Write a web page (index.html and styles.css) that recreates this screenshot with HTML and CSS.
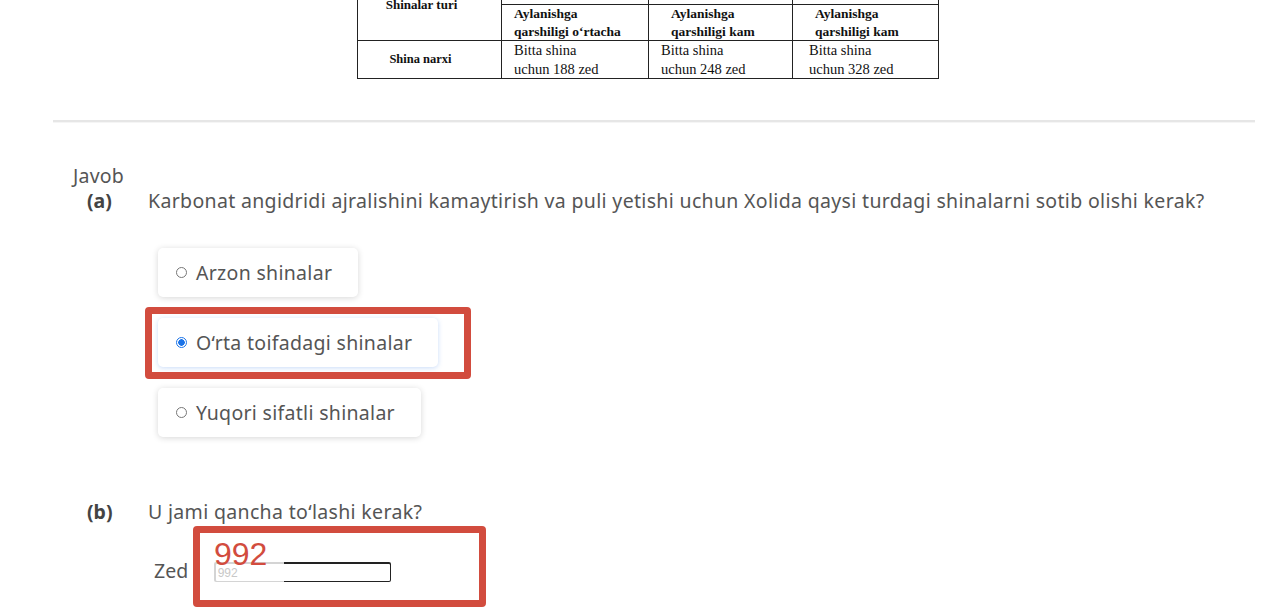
FILE: index.html
```html
<!DOCTYPE html>
<html>
<head>
<meta charset="utf-8">
<link rel="stylesheet" href="styles.css">
</head>
<body>
<div class="page">
  <div class="figure">
    <table class="tires">
      <tr class="r1">
        <td class="c1 hd" rowspan="2">Shinalar turi</td>
        <td class="c2"><b>Arzon</b></td>
        <td class="c3 ctr"><b>shinalar</b></td>
        <td class="c4 ctr"><b>shinalar</b></td>
      </tr>
      <tr class="r2">
        <td class="sub">Aylanishga<br>qarshiligi o‘rtacha</td>
        <td class="sub wide">Aylanishga<br>qarshiligi kam</td>
        <td class="sub wide">Aylanishga<br>qarshiligi kam</td>
      </tr>
      <tr class="r3">
        <td class="hd">Shina narxi</td>
        <td class="price">Bitta shina<br>uchun 188 zed</td>
        <td class="price">Bitta shina<br>uchun 248 zed</td>
        <td class="price p4">Bitta shina<br>uchun 328 zed</td>
      </tr>
    </table>
  </div>

  <div class="divider"></div>

  <section class="answer">
    <div class="javob">Javob</div>
    <div class="part">
      <span class="label">(a)</span>
      <span class="question">Karbonat angidridi ajralishini kamaytirish va puli yetishi uchun Xolida qaysi turdagi shinalarni sotib olishi kerak?</span>
    </div>

    <div class="options">
      <label class="opt"><span class="radio"></span>Arzon shinalar</label>
      <label class="opt selected"><span class="radio on"></span>O‘rta toifadagi shinalar</label>
      <label class="opt"><span class="radio"></span>Yuqori sifatli shinalar</label>
    </div>

    <div class="part part-b">
      <span class="label">(b)</span>
      <span class="question">U jami qancha to‘lashi kerak?</span>
    </div>

    <div class="zed-row">
      <span class="zed">Zed</span>
      <span class="field"><span class="field-inner">992</span></span>
    </div>
  </section>

  <div class="mark mark-a"></div>
  <div class="mark mark-b"></div>
  <div class="hand">992</div>
</div>
</body>
</html>
```

FILE: styles.css
```css
* { box-sizing: border-box; }
html, body { margin: 0; padding: 0; background: #fff; }
body { font-family: "Noto Sans", "Open Sans", sans-serif; color: #555; overflow: hidden; }

.page { position: relative; width: 1280px; height: 612px; overflow: hidden; }

.figure { padding-left: 357px; margin-top: -31px; }
.tires {
  border-collapse: collapse;
  font-family: "Liberation Serif", "Times New Roman", serif;
  color: #111;
}
.tires td { border: 1.5px solid #222; vertical-align: top; padding: 0 0 0 12px; }
.tires .c1 { width: 144px; }
.tires .c2 { width: 147px; }
.tires .c3 { width: 144px; }
.tires .c4 { width: 146px; }
.tires .r1 td { height: 35px; font-size: 13px; line-height: 16px; padding-top: 16px; }
.tires .r1 td.ctr { padding-left: 22px; }
.tires .hd { font-weight: bold; font-size: 13px; text-align: center; vertical-align: middle; padding: 0 10px 0 0; }
.tires .r1 td.hd { padding: 0 16px 0 0; vertical-align: middle; }
.tires .sub { height: 35px; font-weight: bold; font-size: 13.5px; line-height: 17.5px; padding-top: 0; }
.tires .sub.wide { padding-left: 22px; }
.tires .r3 td { height: 38px; }
.tires .price { font-size: 14.5px; line-height: 18.5px; padding-top: 0; }
.tires .price.p4 { padding-left: 16px; }
.tires .r3 td.hd { vertical-align: middle; font-size: 12.5px; padding-right: 18px; }

.divider {
  margin: 41px 25px 0 53px;
  height: 3px;
  border-top: 2px solid #e6e6e6;
  border-bottom: 1px solid #f5f5f5;
}

.answer { padding-top: 41px; font-size: 19.5px; }
.javob { padding-left: 73px; line-height: 24px; letter-spacing: 0.2px; }
.part { display: flex; align-items: center; line-height: 25px; }
.part .label { width: 0; padding-left: 87px; margin-right: 61px; font-weight: bold; color: #444; white-space: nowrap; flex: none; }
.question { white-space: nowrap; letter-spacing: 0.33px; }

.options { display: flex; flex-direction: column; align-items: flex-start; gap: 21px; padding: 35px 0 0 158px; }
.opt {
  display: flex; align-items: center; gap: 9px;
  height: 49px; padding: 0 26px 0 18px;
  background: #fff; border-radius: 5px; letter-spacing: 0.3px;
  box-shadow: 0 1px 6px rgba(0,0,0,0.16);
}
.opt.selected { box-shadow: 0 1px 5px rgba(60,130,230,0.28); }
.radio {
  width: 11px; height: 11px; border-radius: 50%;
  border: 1.2px solid #777; background: #fff; flex: none;
}
.radio.on { border-color: #1a73e8; background: radial-gradient(circle, #1a73e8 0 3px, #fff 3.5px); border-width: 1.5px; }

.part-b { margin-top: 62px; }

.zed-row { display: flex; align-items: center; gap: 26px; padding: 35px 0 0 154px; line-height: 24px; }
.zed { color: #555; }
.field {
  display: inline-block; width: 177px; height: 20px; padding: 1.5px; border-radius: 2px; margin-top: 2px;
  background: linear-gradient(to right, #d4d4d4 0 70px, #222 70px);
}
.field-inner {
  display: block; height: 100%; background: #fff; border-radius: 1px;
  font-family: "Liberation Sans", Arial, sans-serif; font-size: 12px; line-height: 19px;
  color: #c8c8c8; padding-left: 2px;
}

.mark { position: absolute; border: 7px solid #d24c3e; border-radius: 4px; }
.mark-a { left: 145px; top: 307px; width: 326px; height: 72px; }
.mark-b { left: 193px; top: 526px; width: 293px; height: 81px; }
.hand {
  position: absolute; left: 214px; top: 536px;
  font-family: "Liberation Sans", Arial, sans-serif; font-size: 32px; line-height: 36px;
  color: #d24c3e;
}
```
